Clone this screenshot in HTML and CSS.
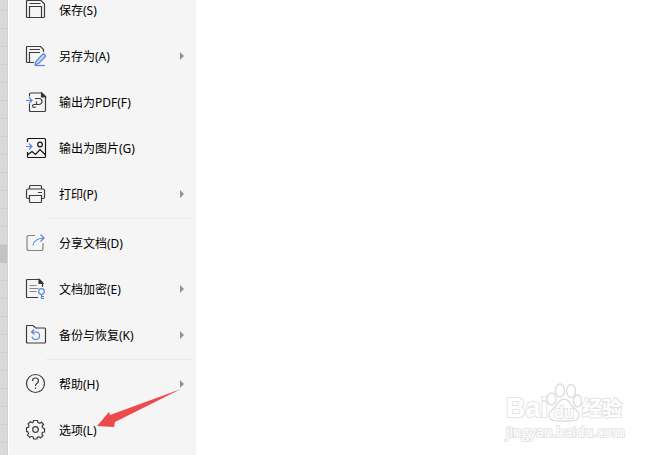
FILE: index.html
```html
<!DOCTYPE html>
<html lang="zh-CN">
<head>
<meta charset="utf-8">
<title>文件</title>
<link rel="stylesheet" href="styles.css">
</head>
<body>
<div class="window">
  <div class="sheet-edge"><div class="row-mark"></div></div>
  <nav class="menu">
    <button class="item"><svg class="icon" viewBox="0 0 24 24"><path d="M3.500 2.500h13.500l3.500 3.500v12.500q0 1-1 1h-16q-1 0-1-1v-15q0-1 1-1zM5.500 19.500V8.500h12v11M5.500 5.500h11"/></svg><span class="label">保存(S)</span></button>
    <button class="item"><svg class="icon" viewBox="0 0 24 24"><path d="M10 18.500H3.500q-1 0-1-1v-14q0-1 1-1h13l3 3V8M5.500 18V8.500h10.500M5.500 5.500h10.500"/><path class="blue-fill" d="M12 17.500l6.500-7q1-1 2 0l.5.5q1 1 0 2l-6.500 6.500-3.500 1z"/><path class="blue" d="M11 21.500h10"/></svg><span class="label">另存为(A)</span><span class="arrow"></span></button>
    <button class="item"><svg class="icon" viewBox="0 0 24 24"><path d="M5.500 6.500V4q0-1 1-1h11.500l3.500 3.500v14q0 1-1 1h-14q-1 0-1-1V14M11 8.500h4a2.800 2.800 0 0 1 0 6h-2.500v-3M12.500 14.500H10a1.500 1.500 0 1 0 1.500 2"/><path class="dark" d="M17.500 3l4 4h-4z"/><path class="blue" d="M2 10.500h6M5 7.500l3 3-3 3"/></svg><span class="label">输出为PDF(F)</span></button>
    <button class="item"><svg class="icon strong" viewBox="0 0 24 24"><path d="M3.500 6V3.500q0-1 1-1h16q1 0 1 1v17q0 1-1 1h-16q-1 0-1-1V16M4 18.500l4-3 3.500 3 4.500-5 5 5"/><circle cx="16" cy="8.500" r="2.300"/><path class="blue" d="M2 10.500h6M5 7.500l3 3-3 3"/></svg><span class="label">输出为图片(G)</span></button>
    <button class="item"><svg class="icon" viewBox="0 0 24 24"><path d="M5.500 7V4.500q0-1 1-1h10q1 0 1 1V7M5.500 16.500H4q-1.500 0-1.500-1.500V8.500Q2.500 7 4 7h15q1.500 0 1.500 1.500V15q0 1.500-1.500 1.500h-1.500M5.500 13.500h12v6q0 1-1 1h-10q-1 0-1-1zM14 10.500h4"/></svg><span class="label">打印(P)</span><span class="arrow"></span></button>
    <hr class="divider">
    <button class="item"><svg class="icon" viewBox="0 0 24 24"><path class="gray" d="M11 4.500H5Q3 4.500 3 6.500v11q0 2 2 2h12q2 0 2-2V12"/><path class="blue" d="M9 14.500q1-7 11-7.500M16.500 3.500l3.500 3.500-3.500 3.500"/></svg><span class="label">分享文档(D)</span></button>
    <button class="item"><svg class="icon" viewBox="0 0 24 24"><path d="M14 20.500H3.500q-1 0-1-1v-16q0-1 1-1h12l3 3V10"/><path class="gray" d="M5.500 8.500h7M5.500 11.500h9M5.500 14.500h7"/><path class="dark" d="M15 2.500l4 4h-4z"/><circle class="blue" cx="17.500" cy="14.500" r="2.800"/><path class="blue" d="M17.500 17.500v4h2.500M17.500 19.500h2.500"/></svg><span class="label">文档加密(E)</span><span class="arrow"></span></button>
    <button class="item"><svg class="icon" viewBox="0 0 24 24"><path d="M3.500 2.500h5.500l2.500 2.500h9q1 0 1 1v13q0 1-1 1h-17q-1 0-1-1v-15.500q0-1 1-1z"/><path class="blue" d="M10 6.500L7.500 9l3 2.500M8 9h4.500a3.800 3.800 0 1 1-4.500 4.500"/></svg><span class="label">备份与恢复(K)</span><span class="arrow"></span></button>
    <hr class="divider">
    <button class="item"><svg class="icon" viewBox="0 0 24 24"><circle cx="11.500" cy="11.500" r="9"/><path d="M8.500 9q0-3 3-3t3 3c0 2-3 2-3 5M11.500 15.500v1.500"/></svg><span class="label">帮助(H)</span><span class="arrow"></span></button>
    <button class="item"><svg class="icon" viewBox="0 0 24 24"><path d="M9.500 2.500h4q0 2.500 2 2.600 1 .1 2-1l2 2.400q-2 1.800-.8 3.200.6.800 1.800.8v3.500q-2.500 0-2.600 1.700 0 1 1 2l-2.400 2.200q-1.600-1.600-3-.6-.7.500-.7 1.700H9.700q0-2.300-1.900-2.500-1-.1-2 .9l-2.300-2.300q1.700-1.600.6-3-.6-.7-1.600-.7V9.800q2.300 0 2.500-1.900 0-1-1-2l2.400-2.200q1.500 1.500 2.700.5.400-.5.400-1.700z"/><circle cx="11.500" cy="11.500" r="2.800"/></svg><span class="label">选项(L)</span></button>
  </nav>
  <main class="page"></main>
</div>
<svg class="pointer" viewBox="0 0 86 40"><path d="M1 38L13 24l1 3L85 1 19 34l-1 5z"/></svg>
<div class="watermark">
  <div class="brand"><span class="bai">Bai</span><span class="paw"><svg viewBox="0 0 36 40"><ellipse cx="5.500" cy="16" rx="4.500" ry="6"/><ellipse cx="14" cy="7.500" rx="4.500" ry="6.500"/><ellipse cx="25" cy="8" rx="4.500" ry="6.500"/><ellipse cx="31.500" cy="18" rx="4" ry="6"/><path d="M18 16c4 0 6 4 8 7s7 5 7 9c0 7-9 6-15 6s-15 1-15-6c0-4 5-6 7-9s4-7 8-7z"/></svg><span class="du">du</span></span><span class="jingyan">经验</span></div>
  <div class="site">jingyan.baidu.com</div>
</div>
</body>
</html>
```
FILE: styles.css
```css
* { box-sizing: border-box; }
body {
  margin: 0;
  overflow: hidden;
  background: #fff;
  font-family: "Noto Sans", "Noto Sans CJK SC", sans-serif;
}
.window {
  display: flex;
  height: 100vh;
  overflow: hidden;
}
.sheet-edge {
  width: 8px;
  flex: none;
  padding-top: 245px;
  border-right: 1px solid #d0d0d0;
  background: repeating-linear-gradient(#d9d9d9 0 10px, #cecece 10px 11px, #d9d9d9 11px 18px);
}
.row-mark {
  height: 18px;
  background: #c3c3c3;
}
.menu {
  width: 188px;
  flex: none;
  margin-top: -13px;
  border-left: 1px solid #fff;
  background: #f5f5f5;
}
.item {
  display: flex;
  align-items: center;
  width: 100%;
  height: 46px;
  padding: 0 12px 0 15px;
  border: 0;
  background: none;
  color: #000;
  font: inherit;
  font-size: 12px;
  text-align: left;
}
.icon {
  width: 24px;
  height: 24px;
  margin-right: 11px;
  flex: none;
  fill: none;
  stroke: #3c3c3c;
  stroke-width: 1.200;
}
.strong { stroke: #151515; }
.icon .blue { stroke: #5588d8; }
.icon .blue-fill { stroke: #5588d8; fill: #c8dcfa; }
.icon .gray { stroke: #858585; }
.icon .dark { fill: #222; }
.label { flex: 1; }
.arrow {
  border: 4px solid transparent;
  border-left: 4px solid #929292;
  border-right: 0;
}
.divider {
  height: 1px;
  margin: 1px 4px 1px 37px;
  border: 0;
  background: #ebebeb;
}
.page { flex: 1; }
.pointer {
  position: absolute;
  left: 96px;
  top: 388px;
  width: 86px;
  height: 40px;
  fill: #ec4a4b;
}
.watermark {
  position: absolute;
  right: 36px;
  bottom: 14px;
  color: #fff;
  font-family: "Open Sans", "Noto Sans CJK SC", sans-serif;
  -webkit-text-stroke: 2px #e4e4e4;
  paint-order: stroke fill;
}
.brand {
  display: flex;
  align-items: flex-end;
  height: 40px;
  font-weight: 700;
}
.bai {
  width: 40px;
  font-family: "Liberation Sans", sans-serif;
  font-size: 27px;
  line-height: 30px;
}
.paw {
  display: grid;
  width: 36px;
  height: 40px;
}
.paw > * { grid-area: 1 / 1; }
.paw svg {
  width: 36px;
  height: 40px;
  fill: #fff;
  stroke: #dedede;
  stroke-width: 1.400;
  paint-order: normal;
}
.du {
  align-self: end;
  justify-self: center;
  font-size: 16px;
  font-weight: 600;
  line-height: 22px;
}
.jingyan {
  font-size: 20px;
  line-height: 28px;
}
.site {
  font-size: 14px;
  line-height: 18px;
}
```
